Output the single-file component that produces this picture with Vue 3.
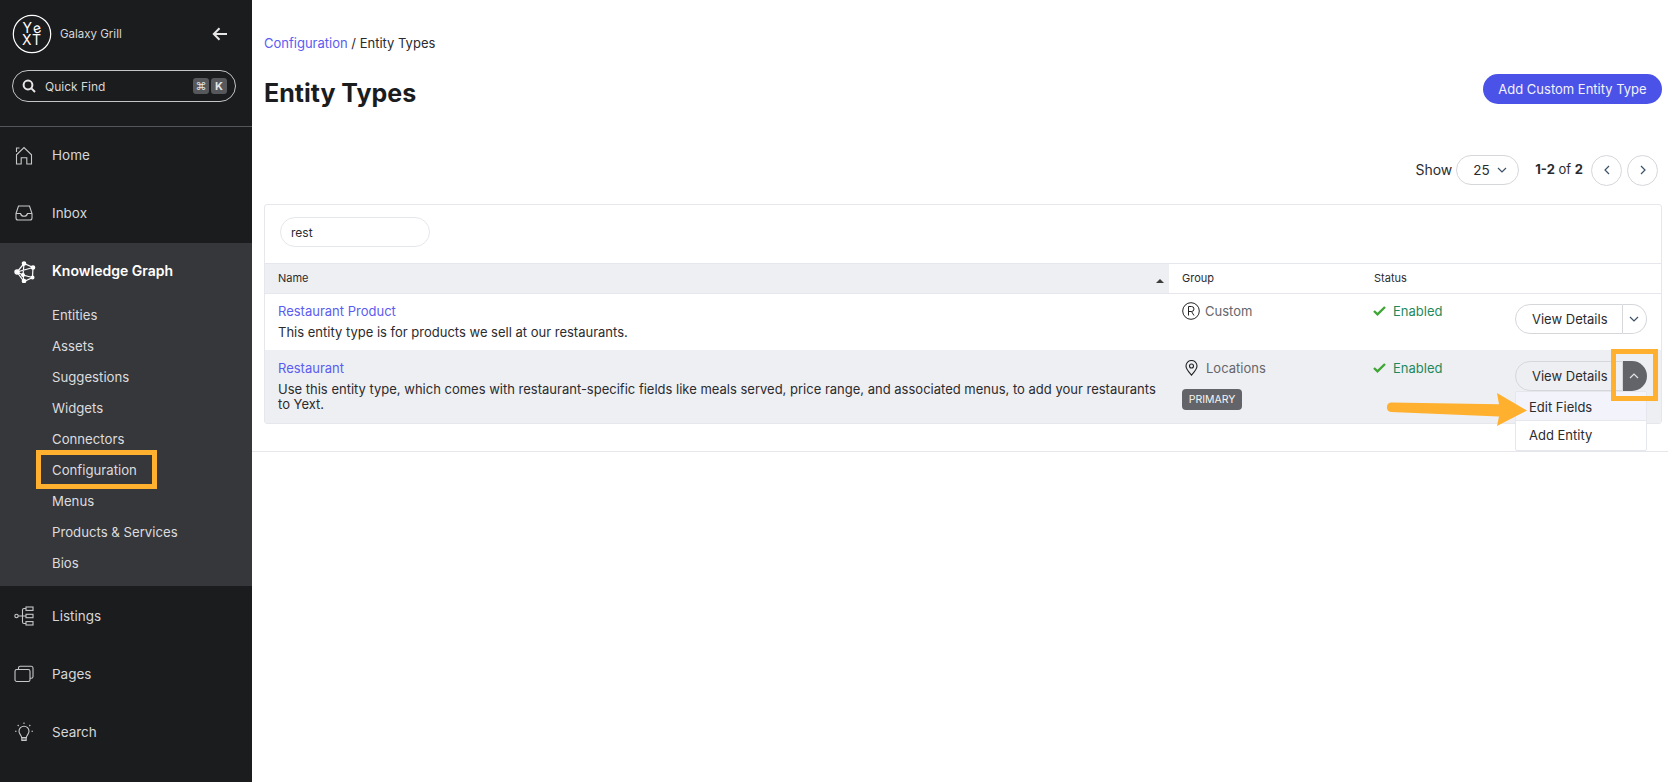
<script setup>
const subItems = ['Entities', 'Assets', 'Suggestions', 'Widgets', 'Connectors', 'Configuration', 'Menus', 'Products & Services', 'Bios']
</script>

<template>
  <div class="app">
    <aside class="sidebar">
      <div class="brand">
        <svg class="logo" width="40" height="40" viewBox="0 0 40 40">
          <circle cx="20" cy="20" r="18.7" fill="none" stroke="#fff" stroke-width="1.2" />
          <text x="10.500" y="19" class="logo-t">Y</text>
          <text x="21" y="19" class="logo-t" transform="rotate(-16 25 15)">e</text>
          <text x="10" y="30.500" class="logo-t">X</text>
          <text x="20" y="30.500" class="logo-t">T</text>
        </svg>
        <span class="brand-name">Galaxy Grill</span>
        <svg class="back" width="16" height="14" viewBox="0 0 16 14" fill="none" stroke="#e6e6e6" stroke-width="2">
          <path d="M15 7H2M7.500 1.200 1.800 7l5.700 5.800" />
        </svg>
      </div>
      <div class="quick">
        <svg width="14" height="14" viewBox="0 0 14 14" fill="none" stroke="#e8e8e8" stroke-width="2">
          <circle cx="6" cy="6" r="4.400" /><path d="m9.400 9.400 3.600 3.600" />
        </svg>
        <span class="quick-label">Quick Find</span>
        <span class="key">⌘</span>
        <span class="key key-k">K</span>
      </div>
      <nav class="nav">
        <a class="nav-row nav-home">
          <svg class="nav-icon" width="20" height="20" viewBox="0 0 20 20" fill="none" stroke="#c8c8c8" stroke-width="1.100">
            <path d="M2.500 18V8.800L10 1.500l7.500 7.300V18h-4.700v-6.200H7.200V18Z" />
            <path d="M2.500 6V2h3" />
          </svg>
          <span>Home</span>
        </a>
        <a class="nav-row">
          <svg class="nav-icon" width="20" height="20" viewBox="0 0 20 20" fill="none" stroke="#c8c8c8" stroke-width="1.100">
            <path d="M2 10.500 4.500 3h11l2.500 7.500V15a2 2 0 0 1-2 2H4a2 2 0 0 1-2-2Z" />
            <path d="M2 10.500h4.500c.5 2 1.700 2.800 3.500 2.800s3-.8 3.500-2.800H18" />
          </svg>
          <span>Inbox</span>
        </a>
        <section class="group">
          <a class="nav-row nav-active">
            <svg class="nav-icon" width="22" height="22" viewBox="0 0 22 22" fill="none" stroke="#fff" stroke-width="1.200">
              <path d="M10 2.500 3 11l7 9.500 8.500-4L19 6.500ZM3 11l16-4.500M10 2.500l-1 11.500 9.500 2.500M9 14l1 6.500M3 11l6 3" />
              <circle cx="10" cy="2.500" r="1.700" fill="#fff" />
              <circle cx="19" cy="6.500" r="1.700" fill="#fff" />
              <circle cx="3" cy="11" r="2.100" fill="#fff" />
              <circle cx="9" cy="14" r="1.400" fill="#fff" />
              <circle cx="18.500" cy="16.500" r="1.400" fill="#fff" />
              <circle cx="10" cy="20" r="1.700" fill="#fff" />
            </svg>
            <span>Knowledge Graph</span>
          </a>
          <a v-for="item in subItems" :key="item" class="sub-row">{{ item }}</a>
        </section>
        <a class="nav-row">
          <svg class="nav-icon" width="20" height="20" viewBox="0 0 20 20" fill="none" stroke="#c8c8c8" stroke-width="1.100">
            <circle cx="2.500" cy="10" r="1.700" />
            <path d="M4.200 10H12M8.500 10V4c0-1 .5-1.500 1.500-1.500h2M8.500 10v6c0 1 .5 1.500 1.500 1.500h2" />
            <rect x="12" y="1" width="7" height="3.400" />
            <rect x="12" y="8.300" width="7" height="3.400" />
            <rect x="12" y="15.600" width="7" height="3.400" />
          </svg>
          <span>Listings</span>
        </a>
        <a class="nav-row">
          <svg class="nav-icon" width="20" height="20" viewBox="0 0 20 20" fill="none" stroke="#c8c8c8" stroke-width="1.100">
            <rect x="1" y="5.500" width="15" height="12" rx="1.800" />
            <path d="M4.500 5.500V4a1.800 1.800 0 0 1 1.800-1.800h11A1.800 1.800 0 0 1 19 4v8.500a1.800 1.800 0 0 1-1.800 1.800H16" />
          </svg>
          <span>Pages</span>
        </a>
        <a class="nav-row">
          <svg class="nav-icon" width="20" height="20" viewBox="0 0 20 20" fill="none" stroke="#c8c8c8" stroke-width="1.100">
            <path d="M7.600 15.500c0-2-2.600-3.500-2.600-6.300a5 5 0 0 1 10 0c0 2.800-2.600 4.300-2.600 6.300Z" />
            <path d="M7.800 15.500v3h4.400v-3M8 17h4M10 .5v1.500M3.700 3l1 1M16.300 3l-1 1M1 9.300h1.500M17.500 9.300H19" />
          </svg>
          <span>Search</span>
        </a>
      </nav>
    </aside>

    <main class="main">
      <section class="page">
        <div class="crumbs"><a class="link">Configuration</a> / Entity Types</div>
        <header class="title-row">
          <h1>Entity Types</h1>
          <button class="primary">Add Custom Entity Type</button>
        </header>
        <div class="pager">
          <span class="pager-text">Show</span>
          <span class="select">
            25
            <svg width="10" height="6" viewBox="0 0 10 6" fill="none" stroke="#3c5068" stroke-width="1.200"><path d="m1 1 4 4 4-4" /></svg>
          </span>
          <span class="count pager-text"><b>1-2</b> of <b>2</b></span>
          <span class="round">
            <svg width="6" height="10" viewBox="0 0 6 10" fill="none" stroke="#3c5068" stroke-width="1.200"><path d="M5 1 1 5l4 4" /></svg>
          </span>
          <span class="round next">
            <svg width="6" height="10" viewBox="0 0 6 10" fill="none" stroke="#3c5068" stroke-width="1.200"><path d="m1 1 4 4-4 4" /></svg>
          </span>
        </div>

        <div class="card">
          <div class="filter"><div class="filter-input">rest</div></div>
          <div class="thead">
            <div class="th-name">
              <span>Name</span>
              <i class="sort"></i>
            </div>
            <div class="col-group">Group</div>
            <div class="col-status">Status</div>
          </div>

          <div class="row row-one">
            <div class="col-name">
              <a class="link title">Restaurant Product</a>
              <p>This entity type is for products we sell at our restaurants.</p>
            </div>
            <div class="col-group cell">
              <div class="group-line">
                <svg width="18" height="18" viewBox="0 0 18 18" fill="none" stroke="#222" stroke-width="1">
                  <circle cx="9" cy="9" r="8.300" />
                  <path d="M6.500 13.500v-9h3a2.500 2.500 0 0 1 0 5h-3M9.500 9.500l2.500 4" />
                </svg>
                <span>Custom</span>
              </div>
            </div>
            <div class="col-status cell">
              <div class="status">
                <svg width="13" height="10" viewBox="0 0 13 10" fill="none" stroke="#3fa535" stroke-width="2.400"><path d="m1 5 3.500 3.300L12 1" /></svg>
                <span>Enabled</span>
              </div>
            </div>
            <div class="col-action">
              <div class="split">
                <span class="split-main">View Details</span>
                <span class="split-toggle">
                  <svg width="10" height="6" viewBox="0 0 10 6" fill="none" stroke="#3c5068" stroke-width="1.200"><path d="m1 1 4 4 4-4" /></svg>
                </span>
              </div>
            </div>
          </div>

          <div class="row row-two">
            <div class="col-name">
              <a class="link title">Restaurant</a>
              <p>Use this entity type, which comes with restaurant-specific fields like meals served, price range, and associated menus, to add your restaurants to Yext.</p>
            </div>
            <div class="col-group cell">
              <div class="group-line line-loc">
                <svg width="13" height="16" viewBox="0 0 13 16" fill="none" stroke="#222" stroke-width="1.100">
                  <path d="M6.500 15.200C4 12.200 1 9.200 1 6a5.500 5.500 0 0 1 11 0c0 3.200-3 6.200-5.500 9.200Z" />
                  <circle cx="6.500" cy="6" r="2" />
                </svg>
                <span>Locations</span>
              </div>
              <span class="badge">PRIMARY</span>
            </div>
            <div class="col-status cell">
              <div class="status">
                <svg width="13" height="10" viewBox="0 0 13 10" fill="none" stroke="#3fa535" stroke-width="2.400"><path d="m1 5 3.500 3.300L12 1" /></svg>
                <span>Enabled</span>
              </div>
            </div>
            <div class="col-action">
              <div class="split">
                <span class="split-main">View Details</span>
                <span class="split-toggle open">
                  <svg width="10" height="6" viewBox="0 0 10 6" fill="none" stroke="#e4e4e6" stroke-width="1.200"><path d="m1 5 4-4 4 4" /></svg>
                </span>
                <div class="menu">
                  <div class="menu-item hover">Edit Fields</div>
                  <div class="menu-item">Add Entity</div>
                </div>
              </div>
            </div>
          </div>
        </div>
      </section>
    </main>

    <div class="mark mark-config"></div>
    <div class="mark mark-toggle"></div>
    <svg class="arrow" width="145" height="36" viewBox="0 0 145 36">
      <path d="M5 9.500 113 11.300 111 0l30 17.500L111 33l2-9.500L5 19a4.800 4.800 0 0 1 0-9.500Z" fill="#ffb02e" />
    </svg>
  </div>
</template>

<style scoped>
.app {
  position: relative;
  display: flex;
  min-height: 782px;
  font-family: Inter, "Liberation Sans", sans-serif;
  color: #2b2b2e;
  background: #fff;
}
.sidebar {
  flex: 0 0 252px;
  height: 782px;
  overflow: hidden;
  background: #1b1c1e;
  color: #d6d6d8;
  font-size: 13.500px;
}
.brand {
  display: flex;
  align-items: center;
  height: 40px;
  padding: 14px 0 0 12px;
}
.logo-t {
  font: 400 14px Inter, sans-serif;
  fill: #fff;
}
.brand-name {
  width: 66px;
  margin-left: 8px;
  font-size: 11.500px;
  color: #d8d8da;
}
.back {
  margin-left: 86px;
}
.quick {
  display: flex;
  align-items: center;
  width: 224px;
  height: 32px;
  margin: 16px 0 0 12px;
  padding: 0 8px 0 9px;
  box-sizing: border-box;
  border: 1px solid #c4c4c6;
  border-radius: 16px;
  font-size: 12px;
}
.quick-label {
  flex: 1;
  margin-left: 9px;
  color: #d8d8da;
}
.key {
  display: flex;
  align-items: center;
  justify-content: center;
  width: 16px;
  height: 16px;
  margin-left: 2px;
  border-radius: 3px;
  background: #56585c;
  color: #e4e4e4;
  font-size: 11px;
}
.key-k {
  font-weight: 700;
}
.nav {
  margin-top: 24px;
  border-top: 1px solid #55565a;
}
.nav-row {
  display: flex;
  align-items: center;
  height: 58px;
  box-sizing: border-box;
  padding-left: 52px;
  position: relative;
}
.nav-home {
  height: 57px;
  padding-bottom: 2px;
}
.nav-icon {
  position: absolute;
  left: 14px;
  top: 50%;
  transform: translateY(-50%);
}
.group {
  margin-top: 1px;
  height: 343px;
  margin-bottom: 1px;
  background: #36373b;
}
.nav-active {
  height: 57px;
  padding-bottom: 2px;
  color: #fff;
  font-size: 14px;
  font-weight: 600;
}
.sub-row {
  display: flex;
  align-items: center;
  height: 31px;
  box-sizing: border-box;
  padding: 0 0 2px 52px;
  font-size: 13.200px;
  color: #dcdcde;
}
.main {
  flex: 1;
  min-width: 0;
}
.page {
  height: 452px;
  box-sizing: border-box;
  padding: 33px 6px 0 12px;
  border-bottom: 1px solid #e6e7ec;
}
.crumbs {
  font-size: 13px;
  line-height: 20px;
  color: #2b2b2e;
}
.link {
  color: #5a5cf2;
}
.title-row {
  display: flex;
  align-items: flex-start;
  justify-content: space-between;
  margin-top: 21px;
}
h1 {
  margin: 0;
  font-size: 25px;
  line-height: 38px;
  font-weight: 700;
  color: #1b1c1e;
}
.primary {
  width: 179px;
  height: 30px;
  padding: 0;
  border: 0;
  border-radius: 15px;
  background: #4a52e8;
  color: #f2f2fd;
  font: 400 13px Inter, sans-serif;
}
.pager {
  display: flex;
  align-items: center;
  justify-content: flex-end;
  height: 30px;
  margin-top: 43px;
  padding-right: 4px;
  font-size: 14px;
}
.pager-text {
  padding-bottom: 2px;
}
.select {
  display: flex;
  align-items: center;
  justify-content: space-between;
  width: 63px;
  height: 30px;
  box-sizing: border-box;
  margin-left: 4px;
  padding: 0 11px 0 16px;
  border: 1px solid #d6d7db;
  border-radius: 15px;
  font-size: 13.500px;
}
.count {
  margin: 0 8px 0 16px;
  font-size: 13px;
}
.round {
  display: flex;
  align-items: center;
  justify-content: center;
  width: 31px;
  height: 31px;
  box-sizing: border-box;
  border: 1px solid #d6d7db;
  border-radius: 50%;
}
.round.next {
  margin-left: 5px;
}
.card {
  margin-top: 19px;
  height: 220px;
  box-sizing: border-box;
  border: 1px solid #e6e7ec;
  border-radius: 3px;
  font-size: 13px;
}
.filter {
  height: 58px;
  padding: 12px 0 0 15px;
  box-sizing: border-box;
}
.filter-input {
  display: flex;
  align-items: center;
  width: 150px;
  height: 30px;
  box-sizing: border-box;
  padding-left: 10px;
  border: 1px solid #e6e7ec;
  border-radius: 15px;
  font-size: 12px;
}
.thead {
  display: flex;
  height: 31px;
  box-sizing: border-box;
  border-top: 1px solid #e6e7ec;
  border-bottom: 1px solid #e6e7ec;
  font-size: 11px;
  line-height: 29px;
}
.th-name {
  position: relative;
  width: 904px;
  padding-left: 13px;
  box-sizing: border-box;
  background: #eeeff3;
}
.sort {
  position: absolute;
  right: 5px;
  top: 15px;
  width: 0;
  height: 0;
  border: 4px solid transparent;
  border-top: 0;
  border-bottom: 4px solid #3c3c3c;
}
.col-group {
  width: 192px;
  padding-left: 13px;
  box-sizing: border-box;
}
.col-status {
  width: 150px;
  padding-left: 13px;
  box-sizing: border-box;
}
.row {
  display: flex;
}
.row-one {
  height: 56px;
}
.row-two {
  height: 73px;
  background: #eeeff3;
}
.col-name {
  width: 904px;
  box-sizing: border-box;
  padding: 8px 0 0 13px;
}
.row-two .col-name {
  padding-top: 9px;
}
.title {
  display: block;
  line-height: 18px;
}
.col-name p {
  margin: 5px 0 0;
  width: 885px;
  line-height: 15px;
  color: #2b2b2e;
}
.cell {
  padding-top: 8px;
}
.row-two .cell {
  padding-top: 9px;
}
.group-line {
  display: flex;
  align-items: center;
  gap: 5px;
  height: 18px;
  color: #65666a;
}
.line-loc {
  gap: 8px;
  padding-left: 3px;
}
.badge {
  display: inline-block;
  margin-top: 12px;
  width: 60px;
  height: 21px;
  line-height: 21px;
  text-align: center;
  border-radius: 4px;
  background: #636469;
  color: #f4f4f4;
  font-size: 10.500px;
}
.status {
  display: flex;
  align-items: center;
  gap: 7px;
  height: 18px;
  margin-left: -1px;
  color: #1d8a5e;
}
.col-action {
  padding: 10px 0 0 4px;
}
.row-two .col-action {
  padding-top: 11px;
}
.split {
  position: relative;
  display: flex;
  width: 132px;
  height: 30px;
  box-sizing: border-box;
}
.split-main {
  width: 108px;
  box-sizing: border-box;
  padding-left: 16px;
  line-height: 28px;
  border: 1px solid #d6d7db;
  border-radius: 15px 0 0 15px;
  background: #fff;
}
.row-two .split-main {
  background: #eeeff3;
}
.split-toggle {
  display: flex;
  align-items: center;
  justify-content: center;
  width: 24px;
  box-sizing: border-box;
  padding-right: 2px;
  border: 1px solid #d6d7db;
  border-left: 0;
  border-radius: 0 15px 15px 0;
}
.split-toggle.open {
  border: 0;
  background: #636469;
}
.menu {
  position: absolute;
  left: 0;
  top: 30px;
  z-index: 2;
  width: 132px;
  box-sizing: border-box;
  border: 1px solid #e6e7ec;
  border-radius: 2px;
  background: #fff;
}
.menu-item {
  height: 29px;
  line-height: 29px;
  padding-left: 13px;
}
.menu-item.hover {
  height: 29px;
  line-height: 30px;
  background: #f3f4fb;
  border-bottom: 1px solid #e6e7ec;
  box-sizing: border-box;
}
.mark {
  position: absolute;
  z-index: 3;
  box-sizing: border-box;
  border: 5px solid #ffb02e;
}
.mark-config {
  left: 36px;
  top: 450px;
  width: 121px;
  height: 39px;
}
.mark-toggle {
  left: 1611px;
  top: 349px;
  width: 47px;
  height: 52px;
}
.arrow {
  position: absolute;
  z-index: 4;
  left: 1386px;
  top: 393px;
}
</style>

<style>
html, body {
  margin: 0;
  background: #fff;
}
</style>
